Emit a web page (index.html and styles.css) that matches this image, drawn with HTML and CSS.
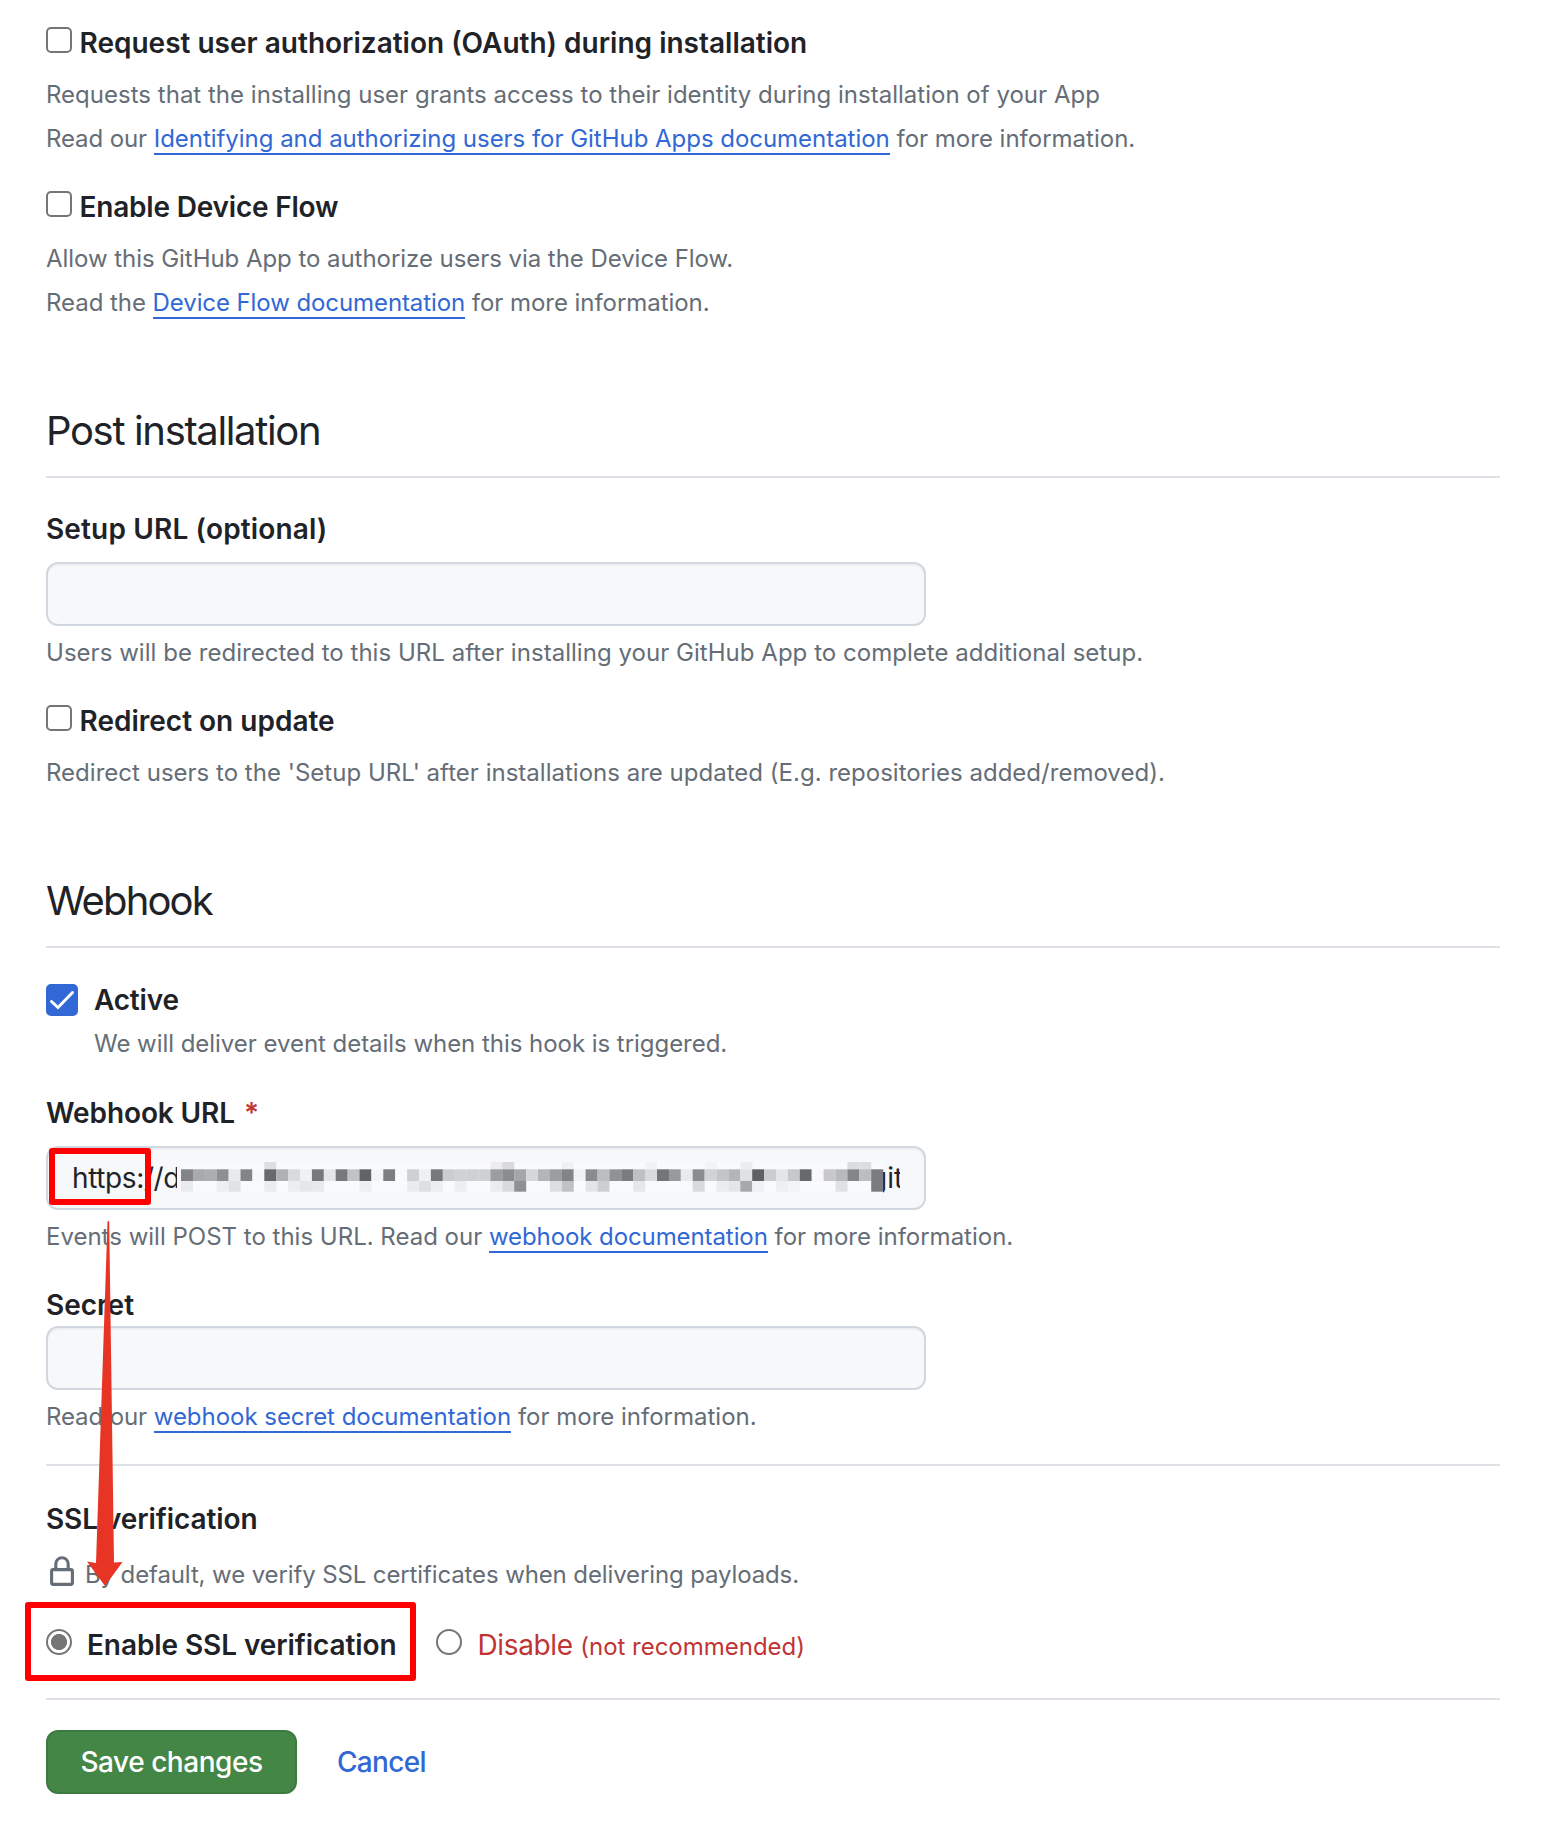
FILE: index.html
```
<!DOCTYPE html>
<html lang="en">
<head>
<meta charset="utf-8">
<title>GitHub App settings</title>
<link rel="stylesheet" href="styles.css">
</head>
<body>
<main class="page">
  <section class="option">
    <label class="choice"><span class="box"></span><span class="strong">Request user authorization (OAuth) during installation</span></label>
    <p class="note note-gap t-requests">Requests that the installing user grants access to their identity during installation of your App</p>
    <p class="note"><span class="t-read">Read our </span><a class="link">Identifying and authorizing users for GitHub Apps documentation</a> for more information.</p>
  </section>

  <section class="option">
    <label class="choice"><span class="box"></span><span class="strong t-narrow">Enable Device Flow</span></label>
    <p class="note note-gap t-tight">Allow this GitHub App to authorize users via the Device Flow.</p>
    <p class="note t-tight">Read the <a class="link link-tight">Device Flow documentation</a> for more information.</p>
  </section>

  <h2 class="heading heading-post">Post installation</h2>
  <section class="group">
    <label class="strong t-setup">Setup URL (optional)</label>
    <div class="field field-gap"></div>
    <p class="note under-field t-users">Users will be redirected to this URL after installing your GitHub App to complete additional setup.</p>
  </section>
  <section class="option">
    <label class="choice"><span class="box"></span><span class="strong">Redirect on update</span></label>
    <p class="note note-gap t-requests">Redirect users to the 'Setup URL' after installations are updated (E.g. repositories added/removed).</p>
  </section>

  <h2 class="heading heading-webhook">Webhook</h2>
  <section class="active">
    <svg class="tick" viewBox="0 0 32 32"><rect width="32" height="32" rx="5" fill="#3168d5"/><path d="M5.500 17.500l6.500 6L26.500 8.500" fill="none" stroke="#fff" stroke-width="3" stroke-linecap="round" stroke-linejoin="miter"/></svg>
    <div class="active-text">
      <span class="strong t-narrow">Active</span>
      <p class="note">We will deliver event details when this hook is triggered.</p>
    </div>
  </section>

  <section class="group group-url">
    <label class="strong t-webhook">Webhook URL <span class="required">*</span></label>
    <div class="field field-gap">
      <span class="url">https://d</span>
      <span class="url-end">git</span>
      <svg class="mosaic" id="mosaic" viewBox="0 0 703 36"></svg>
    </div>
    <p class="note under-field">Events will POST to this URL. Read our <a class="link link-tight">webhook documentation</a> for more information.</p>
  </section>

  <section class="group group-secret">
    <label class="strong">Secret</label>
    <div class="field"></div>
    <p class="note under-field"><span class="t-read">Read our </span><a class="link">webhook secret documentation</a> for more information.</p>
  </section>

  <section class="ssl">
    <span class="strong t-ssl">SSL verification</span>
    <p class="note ssl-note">
      <svg class="lock" viewBox="0 0 24 30" fill="none" stroke="#656d76" stroke-width="3.100"><rect x="1.600" y="13.600" width="20.800" height="14.800" rx="1.600"/><path d="M5.800 13.500V7.900a6.200 6.200 0 0 1 12.400 0v5.600"/></svg>
      <span>By default, we verify SSL certificates when delivering payloads.</span>
    </p>
    <div class="radios">
      <label class="radio-label"><span class="radio radio-on"></span><span class="strong t-ssl">Enable SSL verification</span></label>
      <label class="radio-label danger"><span class="radio"></span><span class="disable">Disable <small>(not recommended)</small></span></label>
    </div>
  </section>

  <footer class="actions">
    <button class="save">Save changes</button>
    <a class="cancel">Cancel</a>
  </footer>
</main>

<div class="mark mark-https"></div>
<div class="mark mark-ssl"></div>
<svg class="arrow" viewBox="0 0 40 366"><path d="M22.500 1.500Q23.500 0.500 24.200 2L29 342.500L37.500 342L20 366L2 341.500L11 343Z" fill="#e73425"/></svg>

<script>
// Pixelated part of the webhook URL: cell index -> grey, one table per row.
const rows = [
  {y: 0, h: 7.3, cells: {7:'dddee0',26:'ededef',27:'d9dadc',32:'f0f1f3',39:'f2f3f4',44:'f2f3f5',47:'ebedf1',56:'dcdddf',57:'dcdddf'}},
  {y: 7.3, h: 11.7, cells: Object.assign({}, '838487 a9aaac adaeb0 8e8f91 e9eaec 838487 f6f7f8 68696c b0b1b4 d9dadd f0f1f3 77787b e4e5e7 77787b c2c3c5 626366 f3f4f6 7c7d80 f8f9fb cfd0d3 eff0f1 77787b cbcccd d0d1d3 cfd0d1 cfd0d1 9c9da0 8b8c8f a5a6aa d6d7d9 b4b5b8 9c9da1 838487 f0f1f3 8a8b8e bcbdc1 919295 7b7c7f bfc0c3 d9dadd 747578 98999c e9eaec 8b8c8f d2d3d5 c4c5c8 b4b5b8 dfe1e5 5f6063 cccdd0 e4e5e8 c7c8cb 68696b f8f8f8 c7c8cb b8b9bc 848588 bcbdc0 7b7c80'.split(' '))},
  {y: 19, h: 10.7, cells: {0:'eaebed',3:'edeef0',4:'e1e3e7',7:'ebecef',9:'ecedef',10:'e6e7ea',11:'e8e9ec',15:'eeeff4',19:'eaebee',20:'dddfe3',21:'edeef1',23:'edeef1',26:'eaecee',27:'d9dadd',28:'8f9094',31:'dddee1',32:'c0c1c5',34:'e3e4e7',35:'cdced1',38:'e6e7ea',43:'d9dadd',45:'ebecef',46:'e4e5e9',47:'a7a8ac',48:'eff1f6',50:'edeff0',51:'f2f4f6',55:'e0e1e4',58:'7b7c80'}}
];
let svg = '<rect x="-4" width="706" height="36" fill="#f6f8fa"/><rect width="702" height="29.700" fill="#f9fafc"/>';
for (const r of rows)
  for (const i in r.cells)
    svg += `<rect x="${i * 11.9}" y="${r.y}" width="12" height="${r.h}" fill="#${r.cells[i]}"/>`;
document.getElementById('mosaic').innerHTML = svg;
</script>
</body>
</html>
```
FILE: styles.css
```
* { box-sizing: border-box; }

body {
  margin: 0;
  background: #fff;
  color: #1f2328;
  font-family: Inter, "Liberation Sans", sans-serif;
  font-size: 24px;
}

.page {
  position: relative;
  width: 1500px;
  padding: 22px 0 0 46px;
}

p, h2 { margin: 0; }

.strong {
  display: block;
  font-size: 28px;
  font-weight: 600;
  line-height: 42px;
  white-space: nowrap;
}

.note {
  color: #656d76;
  line-height: 44px;
  white-space: nowrap;
}
.note-gap { margin-top: 9px; }
.under-field { margin-top: 5px; }

.option { margin-bottom: 25px; }
.choice { display: flex; }
.box {
  width: 26px;
  height: 26px;
  margin: 5px 7.500px 0 0;
  border: 2px solid #767676;
  border-radius: 5px;
}

.link {
  color: #3168d5;
  border-bottom: 2px solid #3168d5;
  letter-spacing: -0.03px;
}
.link-tight { letter-spacing: -0.09px; }

.heading {
  padding-bottom: 15px;
  border-bottom: 2px solid #dee2e7;
  font-size: 40px;
  font-weight: 400;
  line-height: 60px;
}
.heading-post { margin: 76px 0 30px; letter-spacing: -1.35px; }
.heading-webhook { margin: 76px 0 31px; letter-spacing: -1.85px; }

.group { margin-bottom: 25px; }
.field {
  position: relative;
  display: flex;
  align-items: center;
  width: 880px;
  height: 64px;
  padding: 0 24px;
  border: 2px solid #d0d7de;
  border-radius: 12px;
  background: #f6f8fa;
  box-shadow: inset 0 2px 0 #eeeff3;
  font-size: 28px;
  line-height: 42px;
}
.field-gap { margin-top: 12px; }
.url { letter-spacing: -0.38px; }
.url-end {
  width: 30px;
  margin-left: auto;
  overflow: hidden;
}
.mosaic {
  position: absolute;
  top: 14px;
  left: 133px;
  width: 703px;
  height: 36px;
  overflow: visible;
}

.active { display: flex; gap: 16px; }
.tick { width: 32px; height: 32px; margin-top: 5px; }
.active-text .note { margin-top: 1px; letter-spacing: -0.04px; }

.group-url { margin-top: 26px; }
.required { margin-left: 2px; color: #c03a3a; }

.ssl {
  padding: 32px 0 30px;
  border-top: 2px solid #dee2e7;
  border-bottom: 2px solid #dee2e7;
}
.ssl-note {
  display: flex;
  margin-top: 13px;
  letter-spacing: -0.12px;
}
.lock { width: 24px; height: 30px; margin: 3px 11px 0 4px; }

.radios { display: flex; gap: 40px; margin-top: 27px; }
.radio-label { display: flex; gap: 15px; }
.radio {
  width: 26px;
  height: 26px;
  margin-top: 5px;
  border: 2px solid #767676;
  border-radius: 50%;
}
.radio-on { background: radial-gradient(circle, #767676 7.7px, #fff 8.4px); }
.danger { color: #c03434; }
.disable { font-size: 28px; line-height: 42px; letter-spacing: -0.35px; }
.disable small { font-size: 24px; letter-spacing: -0.02px; }

.actions {
  display: flex;
  align-items: center;
  gap: 40px;
  padding-top: 30px;
}
.save {
  width: 251px;
  height: 64px;
  padding: 0;
  border: 2px solid #3d7a40;
  border-radius: 12px;
  background: #448646;
  color: #fff;
  font: 550 28px Inter, sans-serif;
  letter-spacing: -0.45px;
}
.cancel { color: #3168d5; font-size: 28px; font-weight: 550; letter-spacing: -0.7px; }

.t-read { letter-spacing: -0.1px; }
.t-requests { letter-spacing: 0.015px; }
.t-users { letter-spacing: 0.035px; }
.t-tight { letter-spacing: -0.05px; }
.t-setup { letter-spacing: 0.15px; }
.t-narrow { letter-spacing: -0.2px; }
.t-webhook { letter-spacing: -0.1px; }
.t-ssl { letter-spacing: -0.09px; }

/* Annotations drawn over the form */
.mark {
  position: absolute;
  border: 6px solid #fe0000;
  border-radius: 3px;
}
.mark-https { left: 49px; top: 1148px; width: 102px; height: 57px; }
.mark-ssl { left: 25px; top: 1602px; width: 391px; height: 79px; }
.arrow {
  position: absolute;
  left: 85px;
  top: 1220px;
  width: 40px;
  height: 366px;
}
```
